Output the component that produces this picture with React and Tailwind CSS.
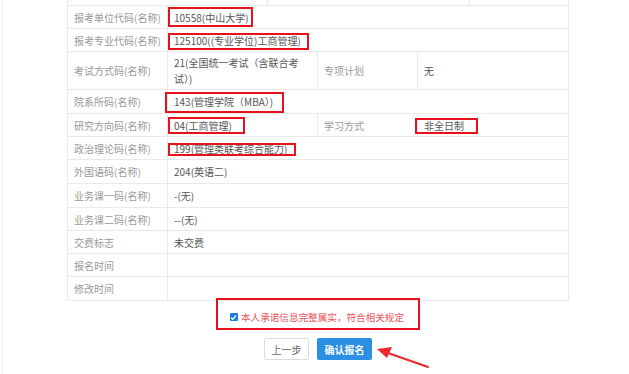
const font = { fontFamily: '"Noto Sans CJK SC", "Liberation Sans", sans-serif' };

const rows = [
  { h: 'h-[23px]', label: '报考单位代码(名称)', value: '10558(中山大学)', mark: 'left-0 top-[1px] w-[85px] h-[20px]' },
  { h: 'h-[23px]', label: '报考专业代码(名称)', value: '125100((专业学位)工商管理)', mark: 'left-0 top-[4px] w-[141px] h-[17px]' },
  {
    h: 'h-[38px]',
    label: '考试方式码(名称)',
    value: '21(全国统一考试（含联合考试）)',
    wrap: true,
    extra: { label: '专项计划', value: '无' },
  },
  { h: 'h-[24px]', label: '院系所码(名称)', value: '143(管理学院（MBA）)', mark: 'left-[-3px] top-[2px] w-[119px] h-[21px]' },
  {
    h: 'h-[23px]',
    label: '研究方向码(名称)',
    value: '04(工商管理)',
    mark: 'left-0 top-[3px] w-[77px] h-[17px]',
    extra: { label: '学习方式', value: '非全日制', mark: 'left-[-3px] top-[4px] w-[63px] h-[16px]' },
  },
  { h: 'h-[23px]', label: '政治理论码(名称)', value: '199(管理类联考综合能力)', mark: 'left-0 top-[6px] w-[128px] h-[13px]' },
  { h: 'h-[24px]', label: '外国语码(名称)', value: '204(英语二)' },
  { h: 'h-[24px]', label: '业务课一码(名称)', value: '-(无)' },
  { h: 'h-[23px]', label: '业务课二码(名称)', value: '--(无)' },
  { h: 'h-[23px]', label: '交费标志', value: '未交费' },
  { h: 'h-[23px]', label: '报名时间', value: '' },
  { h: 'h-[24px]', label: '修改时间', value: '' },
];

function Mark({ cls }) {
  return <span className={`absolute border-2 border-[#e8101a] pointer-events-none ${cls}`} />;
}

function Row({ row }) {
  return (
    <div className={`flex border-b border-[#e9e9e9] ${row.h}`}>
      <div className="w-[100px] shrink-0 border-r border-[#e9e9e9] flex items-center pl-[6px] text-[#999]">
        {row.label}
      </div>
      <div
        className={`relative flex items-center pl-[6px] text-[#555] ${
          row.extra ? 'w-[150px] shrink-0 border-r border-[#e9e9e9]' : 'flex-1'
        }`}
      >
        {row.wrap ? <span className="w-[126px] leading-[16px]">{row.value}</span> : row.value}
        {row.mark && <Mark cls={row.mark} />}
      </div>
      {row.extra && (
        <>
          <div className="w-[100px] shrink-0 border-r border-[#e9e9e9] flex items-center pl-[6px] text-[#999]">
            {row.extra.label}
          </div>
          <div className="relative flex-1 flex items-center pl-[6px] text-[#555]">
            {row.extra.value}
            {row.extra.mark && <Mark cls={row.extra.mark} />}
          </div>
        </>
      )}
    </div>
  );
}

export default function App() {
  return (
    <div className="w-[629px] h-[374px] bg-white overflow-hidden relative text-[10px]" style={font}>
      <div className="ml-[2px] h-full border-l border-[#eeeeee] pl-[64px]">
        <div className="w-[502px] border-x border-[#e9e9e9]">
          <div className="flex h-[6px] border-b border-[#e9e9e9]">
            <div className="w-[200px] border-r border-[#e9e9e9]" />
            <div className="w-[202px] border-r border-[#e9e9e9]" />
            <div className="flex-1" />
          </div>
          {rows.map((r) => (
            <Row key={r.label} row={r} />
          ))}
        </div>

        <div className="w-[502px] flex flex-col items-center">
          <div className="mt-[-3px] w-[204px] h-[32px] border-2 border-[#e8101a] flex items-end justify-center pb-[4px] pr-[2px]">
            <span className="w-[8px] h-[8px] bg-[#1e7ee0] rounded-[1px] flex items-center justify-center mr-[3px] mb-[3px]">
              <svg width="7" height="7" viewBox="0 0 8 8">
                <path d="M1.2 4.2 L3.2 6 L6.8 1.8" fill="none" stroke="#fff" strokeWidth="1.4" />
              </svg>
            </span>
            <span className="text-[#e9545a] leading-[14px] text-[9.6px]">本人承诺信息完整属实，符合相关规定</span>
          </div>
          <div className="flex gap-[8px] mt-[8px] relative">
            <button className="w-[45px] h-[22px] border border-[#dcdcdc] rounded-[2px] bg-white text-[#666] text-[10px]">
              上一步
            </button>
            <button className="w-[55px] h-[22px] rounded-[2px] bg-[#2b8fe3] text-white text-[10px] font-bold">
              确认报名
            </button>
            <svg className="absolute left-[112px] top-[8px]" width="58" height="26" viewBox="0 0 58 26">
              <path d="M52 21 L12 7" stroke="#f0262b" strokeWidth="2" strokeLinecap="round" />
              <path d="M1 3 L16 1 L11 12 Z" fill="#f0262b" />
            </svg>
          </div>
        </div>
      </div>
    </div>
  );
}
